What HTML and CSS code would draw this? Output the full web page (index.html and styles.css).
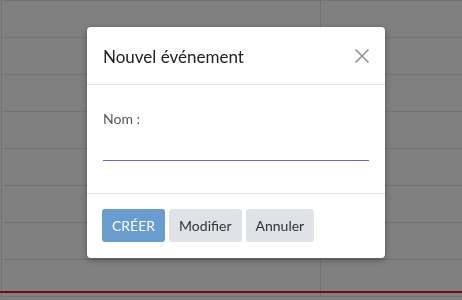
FILE: index.html
```html
<!DOCTYPE html>
<html lang="fr">
<head>
<meta charset="utf-8">
<title>Nouvel événement</title>
<link rel="stylesheet" href="styles.css">
</head>
<body>
<div class="calendar">
  <div class="cell"></div><div class="cell"></div>
  <div class="cell"></div><div class="cell"></div>
  <div class="cell"></div><div class="cell"></div>
  <div class="cell"></div><div class="cell"></div>
  <div class="cell"></div><div class="cell"></div>
  <div class="cell"></div><div class="cell"></div>
  <div class="cell"></div><div class="cell"></div>
  <div class="cell"></div><div class="cell"></div>
  <div class="now-line"></div>
</div>
<div class="overlay">
  <div class="modal">
    <div class="modal-header">
      <h1 class="modal-title">Nouvel événement</h1>
      <button class="close" aria-label="Fermer">
        <svg width="14" height="14" viewBox="0 0 14 14"><path d="M0.5 0.5L13.5 13.5M13.5 0.5L0.5 13.5" stroke="#8c8c8c" stroke-width="1.5" fill="none"/></svg>
      </button>
    </div>
    <div class="modal-body">
      <label class="label" for="nom">Nom :</label>
      <input class="input" id="nom" type="text">
    </div>
    <div class="modal-footer">
      <button class="btn btn-primary">CRÉER</button>
      <button class="btn btn-secondary">Modifier</button>
      <button class="btn btn-secondary">Annuler</button>
    </div>
  </div>
</div>
</body>
</html>
```
FILE: styles.css
```css
html, body {
  margin: 0;
  padding: 0;
  width: 462px;
  height: 300px;
  overflow: hidden;
  background: #808080;
  font-family: Lato, "Liberation Sans", sans-serif;
}
.calendar {
  position: relative;
  display: grid;
  grid-template-columns: 319px 1fr;
  grid-auto-rows: 37px;
  border-top: 1px solid #727272;
  margin-left: 1px;
  border-left: 1px solid #727272;
}
.cell {
  box-sizing: border-box;
  border-bottom: 1px solid #727272;
}
.cell:nth-child(odd) {
  border-right: 1px solid #727272;
}
.now-line {
  position: absolute;
  left: -2px;
  right: 0;
  top: 290px;
  height: 2px;
  background: #7a0a0a;
}
.overlay {
  position: fixed;
  inset: 0;
  padding: 27px 0 0 87px;
}
.modal {
  width: 298px;
  background: #fff;
  border-radius: 4px;
  box-shadow: 0 2px 6px rgba(0,0,0,0.35);
}
.modal-header {
  height: 58px;
  box-sizing: border-box;
  padding: 0 16px;
  display: flex;
  align-items: center;
  justify-content: space-between;
  border-bottom: 1px solid #e3e3e3;
}
.modal-title {
  margin: 0;
  font-size: 17px;
  font-weight: 400;
  color: #222;
  padding-top: 1px;
}
.close {
  border: 0;
  background: none;
  padding: 0;
  width: 14px;
  height: 14px;
  display: flex;
}
.modal-body {
  height: 108px;
  box-sizing: border-box;
  padding: 24px 16px 0;
  display: flex;
  flex-direction: column;
}
.label {
  font-size: 14px;
  color: #555;
  line-height: 20px;
}
.input {
  margin-top: 10px;
  width: 266px;
  height: 22px;
  box-sizing: border-box;
  border: 0;
  border-bottom: 1.5px solid #7560c4;
  padding: 0;
  outline: none;
  background: transparent;
  font: inherit;
}
.modal-footer {
  border-top: 1px solid #e3e3e3;
  padding: 15px 15px 16px;
  display: flex;
  gap: 4px;
}
.btn {
  height: 33px;
  padding: 0 10px;
  border: 0;
  border-radius: 3px;
  font-family: Lato, "Liberation Sans", sans-serif;
  font-size: 14px;
}
.btn-primary {
  background: #699dd0;
  color: #fff;
}
.btn-secondary {
  background: #dfe2e6;
  color: #333;
}
```
